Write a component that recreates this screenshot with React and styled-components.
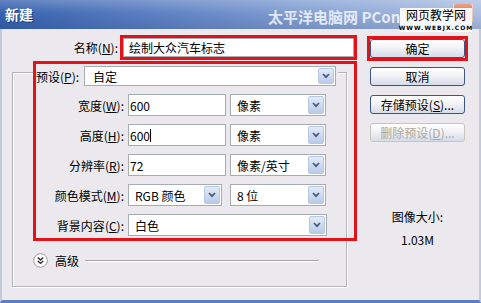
import React from 'react';
import styled, { createGlobalStyle } from 'styled-components';

const GlobalStyle = createGlobalStyle`
  html, body {
    margin: 0;
    padding: 0;
    background: #fff;
  }
  body {
    font-family: "Noto Sans CJK SC", "Noto Sans", sans-serif;
    font-size: 12px;
    color: #000;
  }
`;

const BG = '#ebe9ed';
const RED = '#e2121b';

const Window = styled.div`
  width: 481px;
  height: 303px;
  display: flex;
  flex-direction: column;
  overflow: hidden;
`;

const TitleBar = styled.div`
  position: relative;
  height: 29px;
  flex-shrink: 0;
  display: flex;
  align-items: flex-start;
  background:
    linear-gradient(to bottom, rgba(255, 255, 255, 0.22), rgba(255, 255, 255, 0) 45%, rgba(0, 20, 60, 0.12)),
    linear-gradient(to right, #3662ae 0%, #5a7ec2 30%, #8ca7d7 70%, #adc0e3 100%);
`;

const Title = styled.div`
  margin: 6px 0 0 5px;
  font-size: 14px;
  font-weight: 700;
  line-height: 16px;
  color: #fff;
  text-shadow: 1px 1px 0 #1d3c7a;
`;

const Watermark = styled.div`
  position: absolute;
  left: 268px;
  top: 8px;
  width: 132px;
  overflow: hidden;
  font-size: 15px;
  font-weight: 700;
  line-height: 17px;
  white-space: nowrap;
  color: rgba(255, 255, 255, 0.78);
`;

const CloseBtn = styled.div`
  margin: 3px 8px 0 auto;
  width: 18px;
  height: 18px;
  border-radius: 3px;
  border: 1px solid rgba(255, 255, 255, 0.6);
  background: linear-gradient(#eba186, #c84a30);
  display: flex;
  align-items: center;
  justify-content: center;
`;

const Logo = styled.div`
  position: absolute;
  left: 400px;
  top: 8px;
  width: 72px;
  height: 24px;
  background: rgba(255, 255, 255, 0.93);
  display: flex;
  flex-direction: column;
  align-items: center;
`;

const LogoMain = styled.div`
  font-size: 12px;
  line-height: 14px;
  color: #000;
`;

const LogoSub = styled.div`
  margin-top: 2px;
  font-family: "DejaVu Sans", sans-serif;
  font-size: 6px;
  font-weight: 700;
  line-height: 7px;
  letter-spacing: 1px;
  color: #000;
`;

const Body = styled.div`
  flex: 1;
  display: flex;
  background: ${BG};
  border-left: 2px solid #c3c9d7;
  border-right: 2px solid #c3c9d7;
  border-bottom: 3px solid #5c7fc0;
`;

const Main = styled.div`
  width: 355px;
  display: flex;
  flex-direction: column;
`;

const Highlight = styled.div`
  box-sizing: border-box;
  border: 3px solid ${RED};
`;

const NameRow = styled.div`
  display: flex;
  align-items: center;
  margin-top: 6px;
`;

const NameLabel = styled.div`
  box-sizing: border-box;
  width: 118px;
  padding-right: 2px;
  text-align: right;
`;

const NameBox = styled(Highlight)`
  width: 237px;
`;

const TextBox = styled.div`
  box-sizing: border-box;
  width: ${p => p.$w || 98}px;
  height: ${p => p.$h || 22}px;
  border: 1px solid #a5acb2;
  background: #fff;
  padding-left: ${p => p.$pad || 1}px;
  display: flex;
  align-items: center;
  white-space: nowrap;
`;

const Caret = styled.span`
  display: inline-block;
  width: 1px;
  height: 13px;
  background: #000;
`;

const Group = styled.div`
  box-sizing: border-box;
  margin: 12px 0 0 10px;
  width: 335px;
  height: 215px;
  border: 1px solid #b3b2b8;
  box-shadow: inset 1px 1px 0 #fff, 1px 1px 0 #fff;
  display: flex;
  flex-direction: column;
`;

const GroupBox = styled(Highlight)`
  width: 324px;
  margin: -12px 0 0 20px;
  padding-bottom: 2px;
  display: flex;
  flex-direction: column;
`;

const PresetRow = styled.div`
  align-self: flex-start;
  display: flex;
  align-items: center;
  margin-top: 2px;
  padding-right: 2px;
  background: ${BG};
`;

const PresetLabel = styled.div`
  width: 48px;
`;

const Fields = styled.div`
  display: flex;
  flex-direction: column;
  gap: 8px;
  margin-top: 8px;
`;

const FieldRow = styled.div`
  display: flex;
  align-items: center;
  gap: 4px;
  height: 22px;
`;

const FieldLabel = styled.div`
  width: 88px;
  text-align: right;
  white-space: nowrap;
`;

const SelectBox = styled.div`
  box-sizing: border-box;
  width: ${p => p.$w}px;
  height: ${p => p.$h || 22}px;
  margin-right: ${p => p.$mr || 0}px;
  border: 1px solid #a5acb2;
  background: #fff;
  display: flex;
  align-items: stretch;
`;

const SelectText = styled.div`
  flex: 1;
  padding-left: ${p => p.$pad || 6}px;
  display: flex;
  align-items: center;
  white-space: nowrap;
`;

const ArrowBtn = styled.div`
  width: 14px;
  margin: 1px;
  border: 1px solid #b8c7e2;
  border-radius: 2px;
  background: linear-gradient(#e2ebf8, #b9cbe8);
  display: flex;
  align-items: center;
  justify-content: center;
`;

const AdvancedRow = styled.div`
  display: flex;
  align-items: center;
  margin: 12px 0 0 20px;
  height: 15px;
`;

const AdvancedText = styled.span`
  margin-left: 7px;
`;

const Rule = styled.div`
  margin-left: 6px;
  width: 234px;
  height: 1px;
  background: #a7a6aa;
  box-shadow: 0 1px 0 #fff;
`;

const Side = styled.div`
  margin-left: 10px;
  width: 101px;
  display: flex;
  flex-direction: column;
  align-items: center;
`;

const OkBox = styled(Highlight)`
  margin-top: 7px;
`;

const Button = styled.div`
  box-sizing: border-box;
  width: 95px;
  height: 19px;
  margin-top: ${p => p.$mt || 0}px;
  border: 1px solid ${p => (p.$disabled ? '#c9c7ba' : '#3c5682')};
  border-radius: 3px;
  background: linear-gradient(#ffffff, #f3f3f6 45%, #d5dbea);
  color: ${p => (p.$disabled ? '#aca899' : '#000')};
  display: flex;
  align-items: center;
  justify-content: center;
  white-space: nowrap;
`;

const InfoLine = styled.div`
  margin-top: ${p => p.$mt}px;
  line-height: 16px;
  text-align: center;
`;

const Chevron = () => (
  <svg width="8" height="6" viewBox="0 0 8 6">
    <path d="M1 1 L4 4.2 L7 1" stroke="#47597d" strokeWidth="1.7" fill="none" />
  </svg>
);

const Select = ({ w, h, mr, pad, children }) => (
  <SelectBox $w={w} $h={h} $mr={mr}>
    <SelectText $pad={pad}>{children}</SelectText>
    <ArrowBtn>
      <Chevron />
    </ArrowBtn>
  </SelectBox>
);

const Key = ({ label, k }) => (
  <>
    {label}(<u>{k}</u>):
  </>
);

export default function App() {
  return (
    <Window>
      <GlobalStyle />
      <TitleBar>
        <Title>新建</Title>
        <Watermark>太平洋电脑网 PConline</Watermark>
        <CloseBtn>
          <svg width="10" height="10" viewBox="0 0 10 10">
            <path d="M2 2 L8 8 M8 2 L2 8" stroke="#fff" strokeWidth="1.8" />
          </svg>
        </CloseBtn>
        <Logo>
          <LogoMain>网页教学网</LogoMain>
          <LogoSub>WWW.WEBJX.COM</LogoSub>
        </Logo>
      </TitleBar>
      <Body>
        <Main>
          <NameRow>
            <NameLabel>
              <Key label="名称" k="N" />
            </NameLabel>
            <NameBox>
              <TextBox $w={231} $h={19} $pad={5}>绘制大众汽车标志</TextBox>
            </NameBox>
          </NameRow>
          <Group>
            <GroupBox>
              <PresetRow>
                <PresetLabel>
                  <Key label="预设" k="P" />
                </PresetLabel>
                <Select w={252} h={20} pad={8}>自定</Select>
              </PresetRow>
              <Fields>
                <FieldRow>
                  <FieldLabel>
                    <Key label="宽度" k="W" />
                  </FieldLabel>
                  <TextBox>600</TextBox>
                  <Select w={96}>像素</Select>
                </FieldRow>
                <FieldRow>
                  <FieldLabel>
                    <Key label="高度" k="H" />
                  </FieldLabel>
                  <TextBox>
                    600
                    <Caret />
                  </TextBox>
                  <Select w={96}>像素</Select>
                </FieldRow>
                <FieldRow>
                  <FieldLabel>
                    <Key label="分辨率" k="R" />
                  </FieldLabel>
                  <TextBox>72</TextBox>
                  <Select w={96}>像素/英寸</Select>
                </FieldRow>
                <FieldRow>
                  <FieldLabel>
                    <Key label="颜色模式" k="M" />
                  </FieldLabel>
                  <Select w={94} mr={4}>RGB 颜色</Select>
                  <Select w={96}>8 位</Select>
                </FieldRow>
                <FieldRow>
                  <FieldLabel>
                    <Key label="背景内容" k="C" />
                  </FieldLabel>
                  <Select w={199}>白色</Select>
                </FieldRow>
              </Fields>
            </GroupBox>
            <AdvancedRow>
              <svg width="15" height="15" viewBox="0 0 15 15">
                <circle cx="7.5" cy="7.5" r="6.8" fill="#fff" stroke="#9c9ca0" />
                <path d="M4.8 4.6 L7.5 7 L10.2 4.6 M4.8 8 L7.5 10.4 L10.2 8" stroke="#2a2a2a" strokeWidth="1.4" fill="none" />
              </svg>
              <AdvancedText>高级</AdvancedText>
              <Rule />
            </AdvancedRow>
          </Group>
        </Main>
        <Side>
          <OkBox>
            <Button>确定</Button>
          </OkBox>
          <Button $mt={6}>取消</Button>
          <Button $mt={9}>
            存储预设(<u>S</u>)...
          </Button>
          <Button $mt={9} $disabled>
            删除预设(<u>D</u>)...
          </Button>
          <InfoLine $mt={67}>图像大小:</InfoLine>
          <InfoLine $mt={7}>1.03M</InfoLine>
        </Side>
      </Body>
    </Window>
  );
}
